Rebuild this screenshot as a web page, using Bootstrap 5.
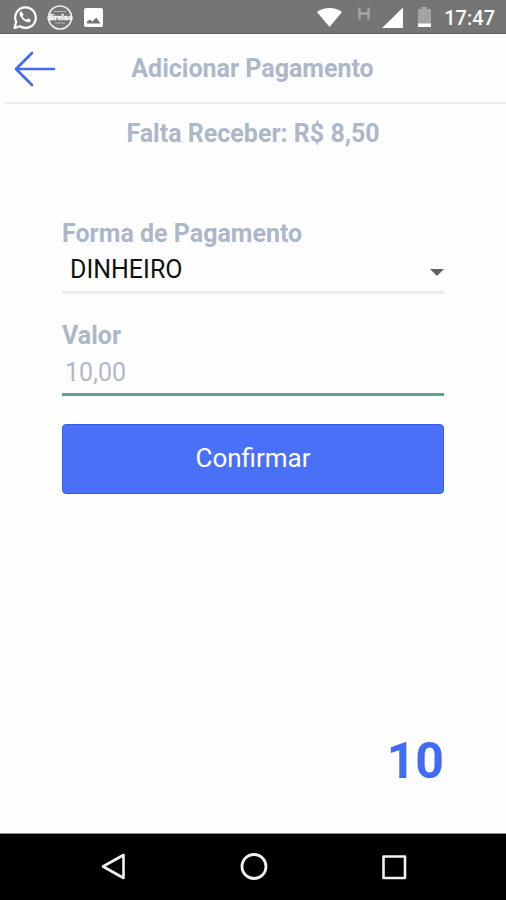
<!DOCTYPE html>
<html lang="pt-BR">
<head>
<meta charset="utf-8">
<meta name="viewport" content="width=device-width, initial-scale=1">
<title>Adicionar Pagamento</title>
<link href="https://cdn.jsdelivr.net/npm/bootstrap@5.3.0/dist/css/bootstrap.min.css" rel="stylesheet">
<style>
body { font-family: Roboto, "Liberation Sans", sans-serif; background: #fefefe; }
svg { display: block; flex: none; }
.status-bar { background: #757575; color: #fff; height: 34px; padding: 0 11px 0 13px; border-bottom: 1px solid #606060; }
.clock { font-size: 20px; line-height: 24px; font-weight: 500; margin-left: 12px; padding-top: 3px; }
.app-header { height: 70px; padding: 2px 14px 0 8px; margin-left: 5px; border-bottom: 2px solid #ececec; }
.back-btn { width: 44px; padding: 0; border: 0; }
.muted-title { font-size: 25px; line-height: 30px; font-weight: 700; color: #adb7ca; margin: 0; }
.due { padding: 15px 0 0; }
.pay-form { padding: 70px 62px 0; }
.pay-form .form-select, .pay-form .form-control { font-size: 25px; line-height: 30px; border: 0; border-radius: 0; box-shadow: none; background-color: transparent; }
.pay-form .form-select { color: #111; height: 45px; padding: 0 24px 0 8px; border-bottom: 3px solid #ececec;
  background-image: url("data:image/svg+xml,%3Csvg xmlns='http://www.w3.org/2000/svg' viewBox='0 0 14 8'%3E%3Cpath d='M0 0h14L7 7z' fill='%23616161'/%3E%3C/svg%3E"); background-size: 14px 8px; background-position: right 0 top 20px; }
.pay-form .form-control { height: 45px; padding: 0 3px; color: #b1b8c6; border-bottom: 3px solid #5ba295; }
.field-gap { margin-bottom: 27px; }
.confirm-btn { height: 70px; margin-top: 28px; padding: 0 0 2px; font-size: 26px; line-height: 30px; border-radius: 4px; color: #fff; --bs-btn-bg: #4a70f7; --bs-btn-color: #fff; --bs-btn-border-color: #2f5fec; --bs-btn-hover-bg: #3f65ee; --bs-btn-hover-color: #fff; }
.total { font-size: 50px; line-height: 60px; font-weight: 700; color: #3f6bf5; padding: 0 62px 42px; }
.nav-keys { background: #000; height: 67px; border-top: 1px solid #888; padding: 0 98px 0 99px; }
.nav-keys .btn { padding: 0; border: 0; }
</style>
</head>
<body>
<div class="d-flex flex-column min-vh-100">
  <div class="status-bar d-flex align-items-center justify-content-between">
    <div class="d-flex align-items-center gap-2">
      <svg width="26" height="26" viewBox="0 0 26 26" fill="none" stroke="#fff"><path d="M1.500 24l1.700-6A10.300 10.300 0 1 1 7 22.300z" stroke-width="2.200" stroke-linejoin="round"/><path d="M8.400 7.300c-.9 0-1.900.9-1.900 2.300 0 3.600 5.300 8.700 8.700 8.700 1.600 0 2.600-1.200 2.600-2.600l-2.900-1.500-1.500 1.600c-1.700-.6-3.200-2.200-3.900-3.800l1.200-1.500z" fill="#fff" stroke="none"/></svg>
      <svg width="26" height="26" viewBox="0 0 26 26"><circle cx="13" cy="13.500" r="11.500" fill="none" stroke="#eee" stroke-width="1.700"/><path d="M7 7.500h12M8 19h10" stroke="#bbb" stroke-width="1"/><text x="13" y="16" text-anchor="middle" font-size="8" font-weight="900" fill="#fff" stroke="#fff" stroke-width=".3">direlao</text></svg>
      <svg width="24" height="24" viewBox="0 0 24 24"><rect x="3" y="3" width="19" height="19" rx="2" fill="#fff"/><path d="M6 18.500v-2l3-2 2.500 2 3.800-4 4.200 6z" fill="#757575"/></svg>
    </div>
    <div class="d-flex align-items-center">
      <svg width="116" height="28" viewBox="0 0 116 28"><path d="M1 9C8 3.500 19 3.500 26 9L13.500 24z" fill="#fff"/><path d="M43.500 4.500v12M52.500 4.500v12M43.500 10.500h9" stroke="#a5a5a5" stroke-width="2.300" fill="none"/><path d="M66 25L87 4.500V25z" fill="#fff"/><path d="M102 6h3V4h6v2h4v15h-13z" fill="#a3a3a3"/><path d="M102 20.500h13V24h-13z" fill="#fff"/></svg>
      <span class="clock">17:47</span>
    </div>
  </div>
  <header class="app-header d-flex align-items-center">
    <button type="button" class="btn back-btn" aria-label="Voltar"><svg width="44" height="36" viewBox="0 0 44 36" fill="none" stroke="#416af3" stroke-width="2.700" stroke-linecap="round" stroke-linejoin="round"><path d="M41 18H3M19 2L3 18l16 16"/></svg></button>
    <h1 class="muted-title flex-grow-1 text-center">Adicionar Pagamento</h1>
    <div class="back-btn"></div>
  </header>
  <main class="d-flex flex-column flex-grow-1">
    <h2 class="muted-title due text-center">Falta Receber: R$ 8,50</h2>
    <form class="pay-form">
      <div class="field-gap">
        <label for="method" class="muted-title d-block">Forma de Pagamento</label>
        <select id="method" class="form-select"><option>DINHEIRO</option></select>
      </div>
      <label for="amount" class="muted-title d-block">Valor</label>
      <input id="amount" type="text" class="form-control" value="10,00">
      <button type="button" class="btn confirm-btn w-100">Confirmar</button>
    </form>
    <div class="total text-end mt-auto">10</div>
  </main>
  <nav class="nav-keys d-flex align-items-center justify-content-between" aria-label="Sistema">
    <button type="button" class="btn" aria-label="Voltar"><svg width="28" height="28" viewBox="0 0 28 28" fill="none" stroke="#f2f2f2" stroke-width="2.600" stroke-linejoin="round"><path d="M24.500 2v23L4 13.500z"/></svg></button>
    <button type="button" class="btn" aria-label="Início"><svg width="28" height="28" viewBox="0 0 28 28" fill="none" stroke="#f2f2f2" stroke-width="2.800"><circle cx="14" cy="13.500" r="12"/></svg></button>
    <button type="button" class="btn" aria-label="Recentes"><svg width="28" height="28" viewBox="0 0 28 28" fill="none" stroke="#f2f2f2" stroke-width="2.600" stroke-linejoin="round"><path d="M3.500 3.500h21.500v21.500H3.500z"/></svg></button>
  </nav>
</div>
<script src="https://cdn.jsdelivr.net/npm/bootstrap@5.3.0/dist/js/bootstrap.bundle.min.js"></script>
</body>
</html>
